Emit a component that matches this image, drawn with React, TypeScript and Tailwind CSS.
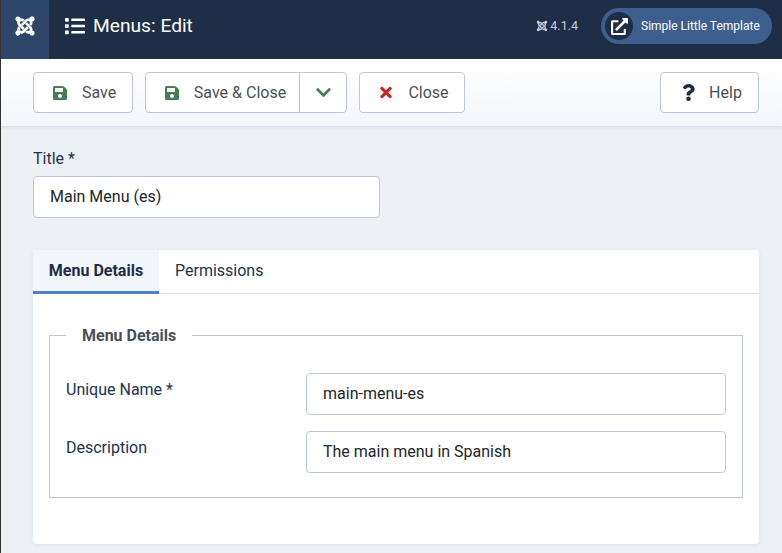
import React from "react";
import { FaSave, FaList, FaTimes, FaChevronDown, FaQuestion, FaJoomla, FaExternalLinkAlt } from "react-icons/fa";

function Btn({ icon, label, w, gap }: { icon: React.ReactNode; label: string; w: string; gap: string }) {
  return (
    <div className={`flex h-[41px] items-center justify-center rounded-[4px] border border-[#bcc7dc] bg-white text-[16px] text-[#495057] ${w} ${gap}`}>
      {icon}
      <span>{label}</span>
    </div>
  );
}

function Input({ value, w }: { value: string; w: string }) {
  return (
    <div className={`flex h-[42px] items-center rounded-[4px] border border-[#b9c8e0] bg-white pl-4 text-[16px] text-[#22262a] ${w}`}>
      {value}
    </div>
  );
}

export default function App() {
  return (
    <div className="h-[553px] w-[782px] overflow-hidden border-l border-[#333333] bg-[#edf1f6] font-['Roboto',sans-serif]">
      <header className="flex h-[59px] bg-[#1f2e47] text-white">
        <div className="flex h-full w-[48px] items-center justify-center bg-[#2d4568] pb-[7px]">
          <FaJoomla className="text-[22px]" />
        </div>
        <div className="flex flex-1 items-center pb-[7px]">
          <FaList className="ml-[16px] text-[20px]" />
          <span className="ml-[8px] text-[19.2px]">Menus: Edit</span>
          <div className="ml-auto flex items-center text-[12.5px] text-[#c3cdde]">
            <FaJoomla className="mr-[2px] text-[12px]" />
            <span>4.1.4</span>
          </div>
          <div className="mr-[10px] ml-[23px] flex h-[36px] w-[171px] items-center rounded-full bg-[#3c5f8e] pl-[4px]">
            <div className="flex h-[28px] w-[28px] items-center justify-center rounded-full bg-[#1f2e47]">
              <FaExternalLinkAlt className="text-[17px]" />
            </div>
            <span className="ml-[8px] text-[12px]">Simple Little Template</span>
          </div>
        </div>
      </header>

      <div className="flex h-[67px] items-start bg-gradient-to-b from-white to-[#f3f5f9] pt-[13px] pl-[32px] shadow-[0_1px_3px_rgba(100,130,180,0.2)]">
        <Btn w="w-[100px] pl-[2px]" gap="gap-[14px]" label="Save" icon={<FaSave className="text-[16px] text-[#457d54]" />} />
        <div className="ml-[12px] flex h-[41px] w-[202px] rounded-[4px] border border-[#bcc7dc] bg-white text-[16px] text-[#495057]">
          <div className="flex flex-1 items-center justify-center gap-[14px] border-r border-[#bcc7dc] pl-[5px]">
            <FaSave className="text-[16px] text-[#457d54]" />
            <span>Save &amp; Close</span>
          </div>
          <div className="flex w-[46px] items-center justify-center">
            <FaChevronDown className="text-[17px] text-[#457d54]" />
          </div>
        </div>
        <div className="ml-[12px]">
          <Btn w="w-[106px] pl-[5px]" gap="gap-[16px]" label="Close" icon={<FaTimes className="h-[17px] w-[12px] text-[#c52827]" />} />
        </div>
        <div className="ml-[195px]">
          <Btn w="w-[99px] pl-[3px]" gap="gap-[12px]" label="Help" icon={<FaQuestion className="text-[17px] text-[#1f2e47]" />} />
        </div>
      </div>

      <main className="pr-[23px] pl-[32px]">
        <label className="mt-[23px] block text-[16px] leading-[19px] text-[#22324d]">Title *</label>
        <div className="mt-[8px]">
          <Input w="w-[347px]" value="Main Menu (es)" />
        </div>

        <section className="mt-[32px] h-[294px] rounded-[4px] bg-white shadow-[0_1px_4px_rgba(100,130,180,0.12)]">
          <div className="flex h-[44px] border-b border-[#dfe4ec] text-[16px]">
            <div className="flex h-[44px] w-[126px] items-center justify-center border-b-[3px] border-[#4f80c6] bg-[#f2f5f9] font-bold text-[#1f2e47]">
              Menu Details
            </div>
            <div className="flex h-[41px] items-center pl-[16px] text-[#22324d]">Permissions</div>
          </div>

          <fieldset className="mx-[16px] mt-[32px] h-[172px] rounded-none border border-[#bcc7dc] px-[16px] pt-[28px]">
            <legend className="px-[16px] text-[16px] leading-[19px] font-bold text-[#495057]">Menu Details</legend>
            <div className="flex items-start">
              <span className="w-[240px] pt-[7px] text-[16px] leading-[19px] text-[#22324d]">Unique Name *</span>
              <Input w="w-[420px]" value="main-menu-es" />
            </div>
            <div className="mt-[16px] flex items-start">
              <span className="w-[240px] pt-[7px] text-[16px] leading-[19px] text-[#22324d]">Description</span>
              <Input w="w-[420px]" value="The main menu in Spanish" />
            </div>
          </fieldset>
        </section>
      </main>
    </div>
  );
}
